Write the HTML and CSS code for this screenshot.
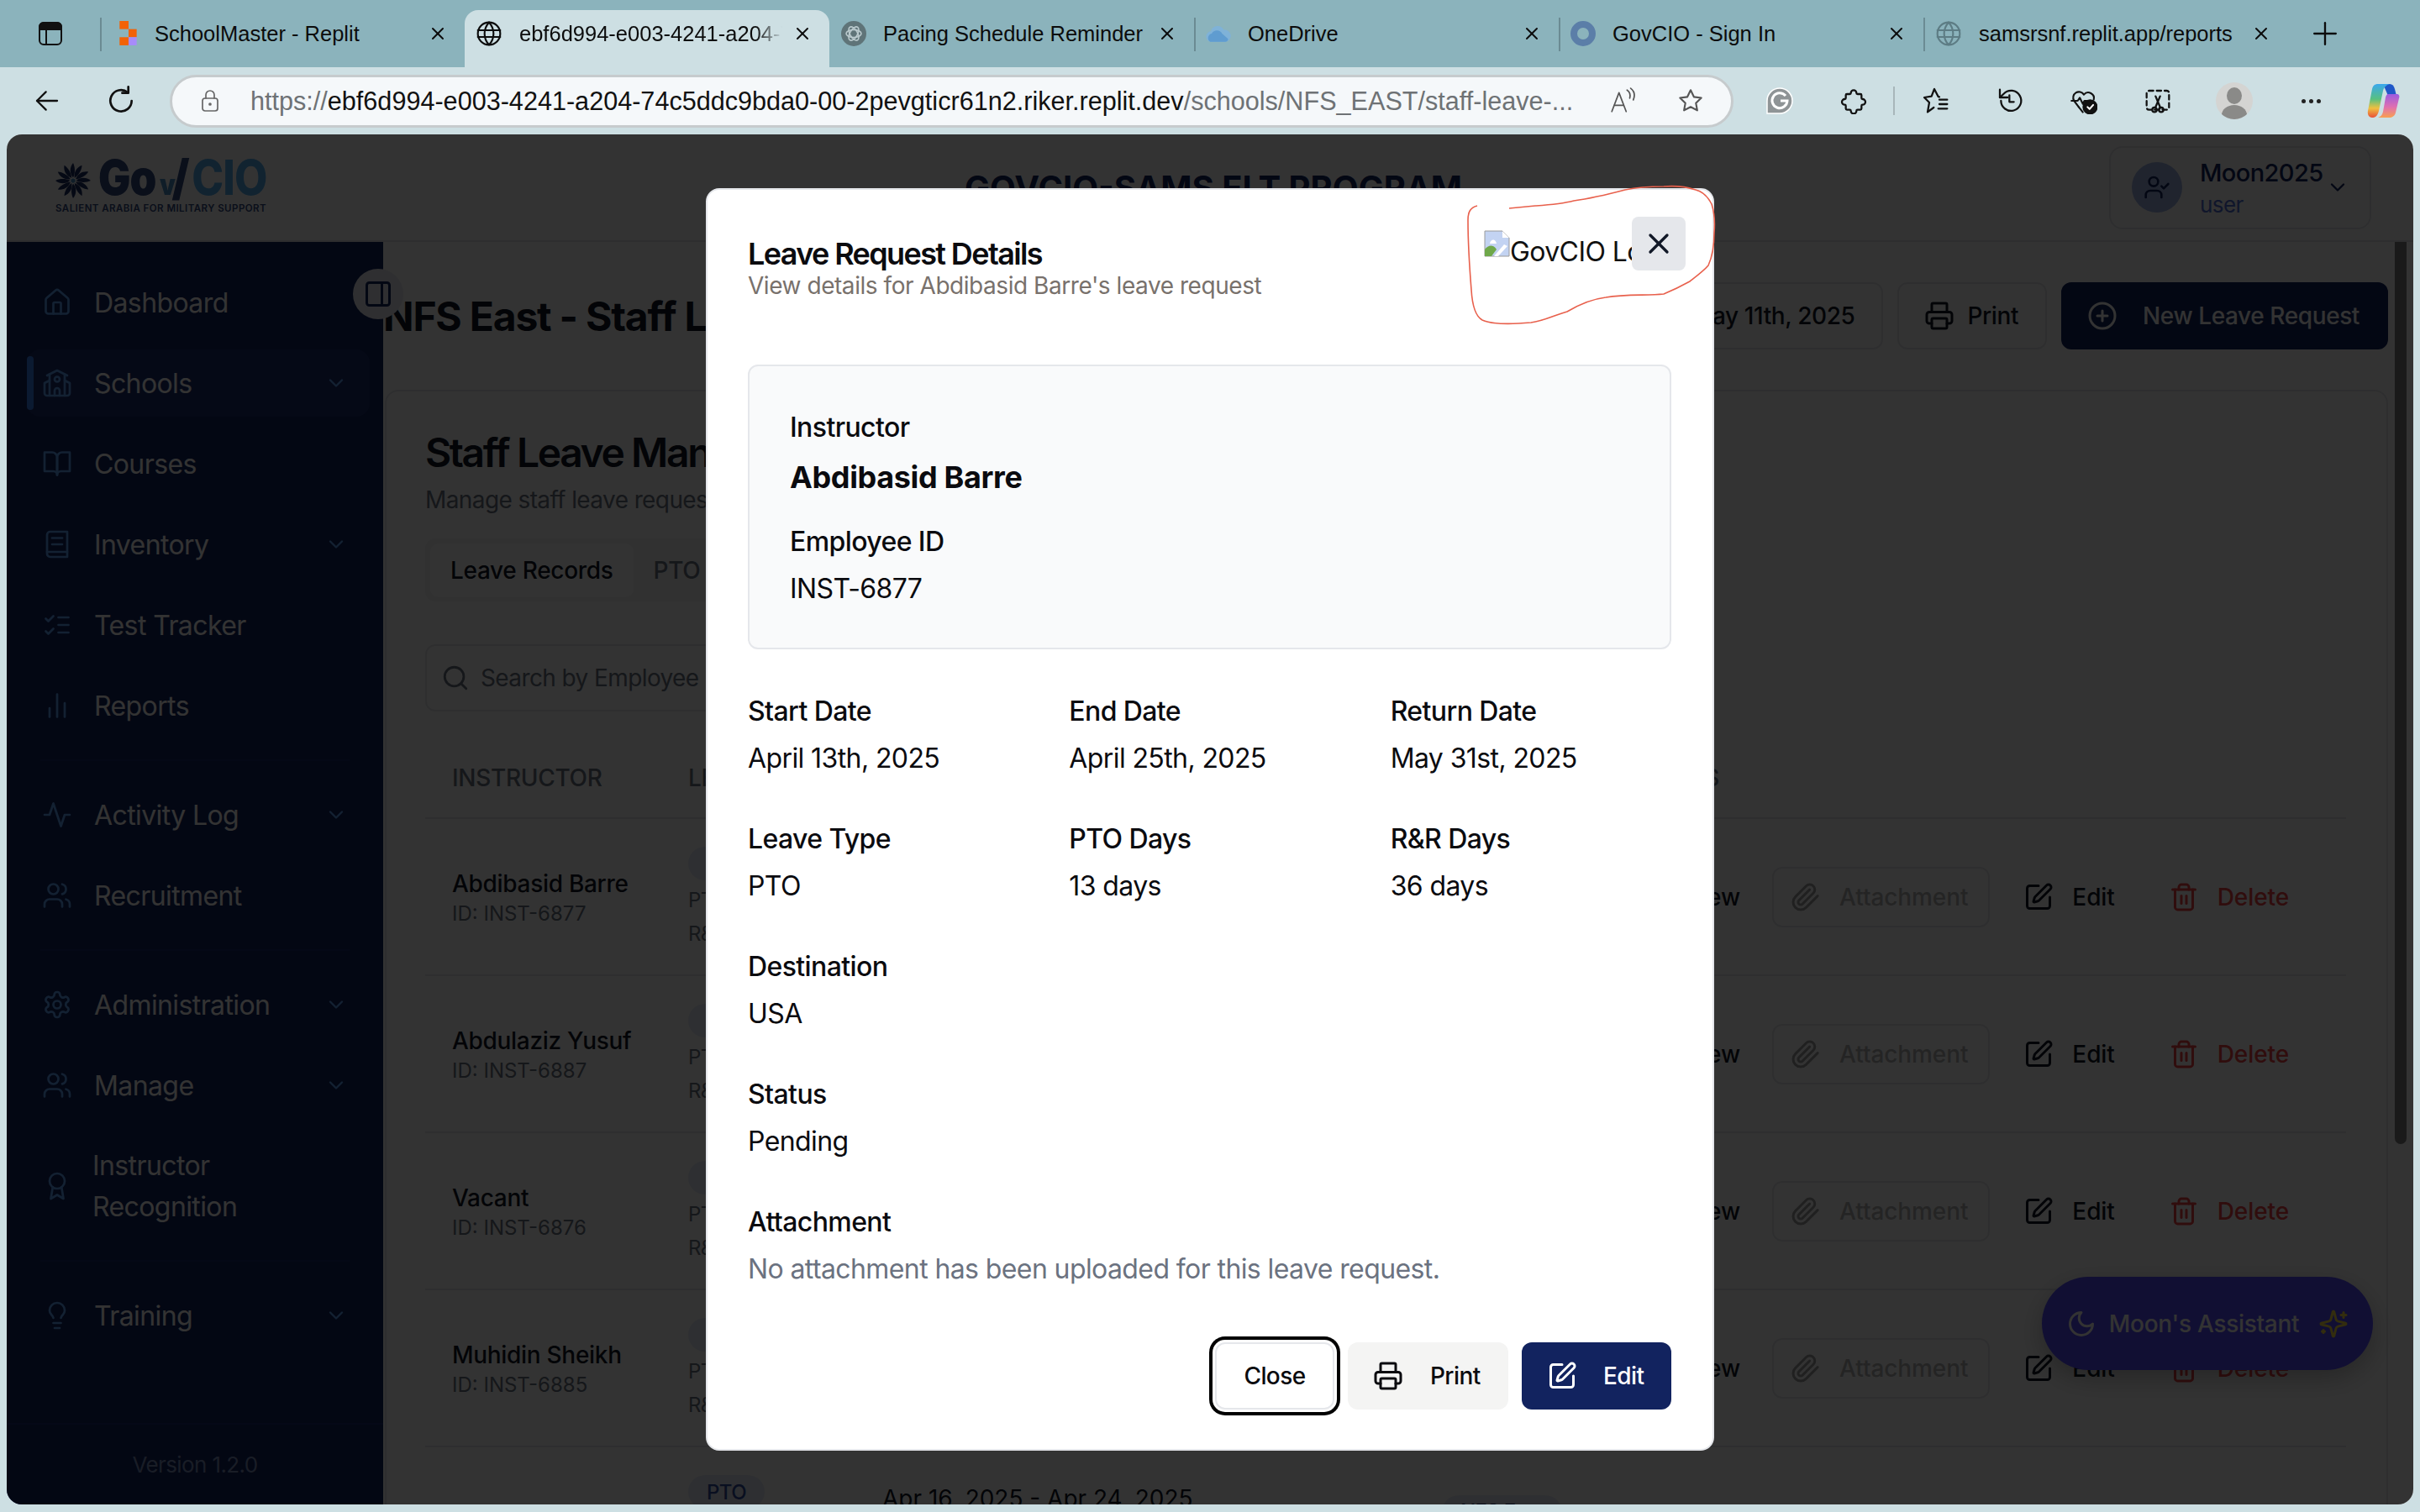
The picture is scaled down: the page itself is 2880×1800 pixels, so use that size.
FILE: index.html
```html
<!DOCTYPE html>
<html lang="en">
<head>
    <meta charset="UTF-8">
    <meta name="viewport" content="width=device-width, initial-scale=1.0">
    <title>Leave Request Details</title>
    <link rel="stylesheet" href="styles.css">
</head>
<body>
    <svg class="sprite" aria-hidden="true">
        <symbol id="i-home" viewBox="0 0 24 24"><path d="M3 10a2 2 0 0 1 .7-1.5l7-6a2 2 0 0 1 2.6 0l7 6a2 2 0 0 1 .7 1.5v9a2 2 0 0 1-2 2H5a2 2 0 0 1-2-2z"/><path d="M15 21v-8a1 1 0 0 0-1-1h-4a1 1 0 0 0-1 1v8"/></symbol>
        <symbol id="i-school" viewBox="0 0 24 24"><path d="M14 22v-4a2 2 0 1 0-4 0v4"/><path d="m18 10 4 2v8a2 2 0 0 1-2 2H4a2 2 0 0 1-2-2v-8l4-2"/><path d="M18 5v17"/><path d="m4 6 8-4 8 4"/><path d="M6 5v17"/><circle cx="12" cy="9" r="2"/></symbol>
        <symbol id="i-book" viewBox="0 0 24 24"><path d="M2 3h6a4 4 0 0 1 4 4v14a3 3 0 0 0-3-3H2z"/><path d="M22 3h-6a4 4 0 0 0-4 4v14a3 3 0 0 1 3-3h7z"/></symbol>
        <symbol id="i-inventory" viewBox="0 0 24 24"><path d="M4 19.5v-15A2.5 2.5 0 0 1 6.5 2H20v20H6.5a2.5 2.5 0 0 1-2.5-2.5z"/><path d="M4 18h16"/><path d="M8 7h8"/><path d="M8 12h8"/></symbol>
        <symbol id="i-checks" viewBox="0 0 24 24"><path d="m3 17 2 2 4-4"/><path d="m3 7 2 2 4-4"/><path d="M13 6h8"/><path d="M13 12h8"/><path d="M13 18h8"/></symbol>
        <symbol id="i-chart" viewBox="0 0 24 24"><path d="M6 21v-7"/><path d="M12 21V3"/><path d="M18 21V10"/></symbol>
        <symbol id="i-activity" viewBox="0 0 24 24"><path d="M22 12h-4l-3 9L9 3l-3 9H2"/></symbol>
        <symbol id="i-users" viewBox="0 0 24 24"><path d="M16 21v-2a4 4 0 0 0-4-4H6a4 4 0 0 0-4 4v2"/><circle cx="9" cy="7" r="4"/><path d="M22 21v-2a4 4 0 0 0-3-3.87"/><path d="M16 3.13a4 4 0 0 1 0 7.75"/></symbol>
        <symbol id="i-settings" viewBox="0 0 24 24"><path d="M12.22 2h-.44a2 2 0 0 0-2 2v.18a2 2 0 0 1-1 1.73l-.43.25a2 2 0 0 1-2 0l-.15-.08a2 2 0 0 0-2.73.73l-.22.38a2 2 0 0 0 .73 2.73l.15.1a2 2 0 0 1 1 1.72v.51a2 2 0 0 1-1 1.74l-.15.09a2 2 0 0 0-.73 2.73l.22.38a2 2 0 0 0 2.73.73l.15-.08a2 2 0 0 1 2 0l.43.25a2 2 0 0 1 1 1.73V20a2 2 0 0 0 2 2h.44a2 2 0 0 0 2-2v-.18a2 2 0 0 1 1-1.73l.43-.25a2 2 0 0 1 2 0l.15.08a2 2 0 0 0 2.73-.73l.22-.39a2 2 0 0 0-.73-2.73l-.15-.08a2 2 0 0 1-1-1.74v-.5a2 2 0 0 1 1-1.74l.15-.09a2 2 0 0 0 .73-2.73l-.22-.38a2 2 0 0 0-2.73-.73l-.15.08a2 2 0 0 1-2 0l-.43-.25a2 2 0 0 1-1-1.73V4a2 2 0 0 0-2-2z"/><circle cx="12" cy="12" r="3"/></symbol>
        <symbol id="i-award" viewBox="0 0 24 24"><circle cx="12" cy="8" r="6"/><path d="M15.477 12.89 17 22l-5-3-5 3 1.523-9.11"/></symbol>
        <symbol id="i-bulb" viewBox="0 0 24 24"><path d="M15 14c.2-1 .7-1.7 1.5-2.5 1-.9 1.5-2.2 1.5-3.5A6 6 0 0 0 6 8c0 1 .2 2.2 1.5 3.5.7.7 1.3 1.5 1.5 2.5"/><path d="M9 18h6"/><path d="M10 22h4"/></symbol>
        <symbol id="i-chevron" viewBox="0 0 24 24"><path d="m6 9 6 6 6-6"/></symbol>
        <symbol id="i-printer" viewBox="0 0 24 24"><path d="M6 18H4a2 2 0 0 1-2-2v-5a2 2 0 0 1 2-2h16a2 2 0 0 1 2 2v5a2 2 0 0 1-2 2h-2"/><path d="M6 9V3a1 1 0 0 1 1-1h10a1 1 0 0 1 1 1v6"/><rect x="6" y="14" width="12" height="8" rx="1"/></symbol>
        <symbol id="i-edit" viewBox="0 0 24 24"><path d="M12 3H5a2 2 0 0 0-2 2v14a2 2 0 0 0 2 2h14a2 2 0 0 0 2-2v-7"/><path d="M18.375 2.625a1 1 0 0 1 3 3l-9.013 9.014a2 2 0 0 1-.853.505l-2.873.84a.5.5 0 0 1-.62-.62l.84-2.873a2 2 0 0 1 .506-.852z"/></symbol>
        <symbol id="i-trash" viewBox="0 0 24 24"><path d="M3 6h18"/><path d="M19 6v14c0 1-1 2-2 2H7c-1 0-2-1-2-2V6"/><path d="M8 6V4c0-1 1-2 2-2h4c1 0 2 1 2 2v2"/><path d="M10 11v6"/><path d="M14 11v6"/></symbol>
        <symbol id="i-clip" viewBox="0 0 24 24"><path d="m21.44 11.05-9.19 9.19a6 6 0 0 1-8.49-8.49l8.57-8.57A4 4 0 1 1 18 8.84l-8.59 8.57a2 2 0 0 1-2.83-2.83l8.49-8.48"/></symbol>
        <symbol id="i-plus-circle" viewBox="0 0 24 24"><circle cx="12" cy="12" r="10"/><path d="M8 12h8"/><path d="M12 8v8"/></symbol>
        <symbol id="i-search" viewBox="0 0 24 24"><circle cx="11" cy="11" r="8"/><path d="m21 21-4.3-4.3"/></symbol>
        <symbol id="i-moon" viewBox="0 0 24 24"><path d="M12 3a6 6 0 0 0 9 9 9 9 0 1 1-9-9Z"/></symbol>
        <symbol id="i-sparkles" viewBox="0 0 24 24"><path d="M9.937 15.5A2 2 0 0 0 8.5 14.063l-6.135-1.582a.5.5 0 0 1 0-.962L8.5 9.936A2 2 0 0 0 9.937 8.5l1.582-6.135a.5.5 0 0 1 .963 0L14.063 8.5A2 2 0 0 0 15.5 9.937l6.135 1.581a.5.5 0 0 1 0 .964L15.5 14.063a2 2 0 0 0-1.437 1.437l-1.582 6.135a.5.5 0 0 1-.963 0z"/><path d="M20 3v4"/><path d="M22 5h-4"/><path d="M4 17v2"/><path d="M5 18H3"/></symbol>
        <symbol id="i-user-check" viewBox="0 0 24 24"><path d="M16 21v-2a4 4 0 0 0-4-4H6a4 4 0 0 0-4 4v2"/><circle cx="9" cy="7" r="4"/><path d="m16 11 2 2 4-4"/></symbol>
        <symbol id="i-panel" viewBox="0 0 24 24"><rect width="18" height="18" x="3" y="3" rx="2"/><path d="M15 3v18"/></symbol>
        <symbol id="i-x" viewBox="0 0 24 24"><path d="M18 6 6 18"/><path d="m6 6 12 12"/></symbol>
        <symbol id="i-globe" viewBox="0 0 24 24"><circle cx="12" cy="12" r="10"/><path d="M12 2a14.5 14.5 0 0 0 0 20 14.5 14.5 0 0 0 0-20"/><path d="M2 9h20"/><path d="M2 15h20"/></symbol>
    </svg>

    <div class="browser">
        <div class="tabbar">
            <div class="window-btn">
                <svg class="icon" viewBox="0 0 28 28"><rect x="1" y="1" width="26" height="26" rx="5"/><path class="solid" d="M1 6a5 5 0 0 1 5-5h16a5 5 0 0 1 5 5v3H1z"/><path d="M9 9v18"/></svg>
            </div>
            <div class="tab tab-first">
                <svg class="favicon" viewBox="0 0 20 28"><rect x="0" y="0" width="10" height="9" fill="#f26207"/><rect x="10" y="9" width="9" height="9" fill="#f26207"/><rect x="0" y="18" width="10" height="9" fill="#f26207"/><rect x="10" y="18" width="9" height="9" fill="#a78bfa"/></svg>
                <span class="tab-title">SchoolMaster - Replit</span>
                <svg class="icon tab-close"><use href="#i-x"/></svg>
            </div>
            <div class="tab tab-active">
                <svg class="icon favicon-globe"><use href="#i-globe"/></svg>
                <span class="tab-title tab-fade">ebf6d994-e003-4241-a204-74c5ddc9bda0</span>
                <svg class="icon tab-close"><use href="#i-x"/></svg>
            </div>
            <div class="tab tab-after-active">
                <svg class="favicon" viewBox="0 0 30 30"><circle cx="15" cy="15" r="15" fill="#5f7478"/><g fill="none" stroke="#b9c9cc" stroke-width="1.6"><ellipse cx="15" cy="15" rx="9" ry="4.5"/><ellipse cx="15" cy="15" rx="9" ry="4.5" transform="rotate(60 15 15)"/><ellipse cx="15" cy="15" rx="9" ry="4.5" transform="rotate(120 15 15)"/></g></svg>
                <span class="tab-title">Pacing Schedule Reminder</span>
                <svg class="icon tab-close"><use href="#i-x"/></svg>
            </div>
            <div class="tab">
                <svg class="favicon" viewBox="0 0 34 24"><path fill="#7fb2d8" d="M8 23a7 7 0 0 1-1-14 9 9 0 0 1 17-2 7 7 0 0 1 3 16z"/><path fill="#5f9cd0" d="M6 23a6 6 0 0 1 2-11 8 8 0 0 1 14 0l8 7a4 4 0 0 1-3 4z"/></svg>
                <span class="tab-title">OneDrive</span>
                <svg class="icon tab-close"><use href="#i-x"/></svg>
            </div>
            <div class="tab">
                <svg class="favicon" viewBox="0 0 30 30"><circle cx="15" cy="15" r="11" fill="none" stroke="#5b7ea8" stroke-width="8"/></svg>
                <span class="tab-title">GovCIO - Sign In</span>
                <svg class="icon tab-close"><use href="#i-x"/></svg>
            </div>
            <div class="tab tab-last">
                <svg class="icon favicon-globe favicon-muted"><use href="#i-globe"/></svg>
                <span class="tab-title">samsrsnf.replit.app/reports</span>
                <svg class="icon tab-close"><use href="#i-x"/></svg>
            </div>
            <div class="new-tab">
                <svg class="icon" viewBox="0 0 24 24"><path d="M12 1v22"/><path d="M1 12h22"/></svg>
            </div>
        </div>

        <div class="toolbar">
            <svg class="icon tool tool-back" viewBox="0 0 24 24"><path d="M21 12H3"/><path d="m11 4-8 8 8 8"/></svg>
            <svg class="icon tool tool-reload" viewBox="0 0 24 24"><path d="M20 12a8 8 0 1 1-3-6.3"/><path d="M17.5 1.5v4.6h-4.6"/></svg>
            <div class="urlbar">
                <svg class="icon url-lock" viewBox="0 0 24 28"><rect x="3" y="11" width="18" height="15" rx="3"/><path d="M7 11V7a5 5 0 0 1 10 0v4"/><circle cx="12" cy="18" r="1"/></svg>
                <span class="url-text"><span class="url-dim">https://</span>ebf6d994-e003-4241-a204-74c5ddc9bda0-00-2pevgticr61n2.riker.replit.dev<span class="url-dim">/schools/NFS_EAST/staff-leave-...</span></span>
                <svg class="icon url-icon url-read" viewBox="0 0 30 30"><path d="M3 27 11 6l8 21"/><path d="M6 20h10"/><path d="M20 3c3 2 4 5 3 9"/><path d="M24 1c4 3 5 8 3 13"/></svg>
                <svg class="icon url-icon" viewBox="0 0 24 24"><path d="m12 2.5 2.9 6 6.6.9-4.8 4.6 1.2 6.5L12 17.4l-5.9 3.1 1.2-6.5-4.8-4.6 6.6-.9z"/></svg>
            </div>
            <div class="tool-group">
                <svg class="ext-g" viewBox="0 0 32 32"><path fill="#8f9496" stroke="#fff" stroke-width="1.5" d="M16 1a15 15 0 0 1 0 30H1V16A15 15 0 0 1 16 1z"/><path fill="none" stroke="#fff" stroke-width="3" d="M23 10a9 9 0 1 0 2 6h-8"/></svg>
                <svg class="icon tool" viewBox="0 0 24 24"><path d="M9.5 5a2.5 2.5 0 1 1 5 0c0 .6.4 1 1 1H18a1 1 0 0 1 1 1v2.5c0 .6.4 1 1 1a2.5 2.5 0 0 1 0 5 1 1 0 0 0-1 1V19a1 1 0 0 1-1 1h-2.5a1 1 0 0 0-1 1 2.5 2.5 0 0 1-5 0 1 1 0 0 0-1-1H6a1 1 0 0 1-1-1v-2.5a1 1 0 0 0-1-1 2.5 2.5 0 0 1 0-5 1 1 0 0 0 1-1V7a1 1 0 0 1 1-1h2.5c.6 0 1-.4 1-1z"/></svg>
                <span class="tool-sep"></span>
                <svg class="icon tool" viewBox="0 0 24 24"><path d="M15 8.5 14 8.300 10.500 1.500 8 8 1.500 9l4.500 4.500L4.500 22l5.500-4"/><path d="M15 11h7"/><path d="M15 15h7"/><path d="M14 19h8"/></svg>
                <svg class="icon tool" viewBox="0 0 24 24"><path d="M4 12a9 9 0 1 0 2.600-6.400L3 9"/><path d="M3 2v7h7"/><path d="M11.500 7v6h4"/></svg>
                <svg class="icon tool" viewBox="0 0 26 26"><path d="M8 19 3.500 13a5.500 5.500 0 0 1 9.500-6 5.500 5.500 0 0 1 9.500 5"/><path d="M1 13h6l2-3 3 6 1.500-3h2"/><path d="m8 19 4 5"/><circle class="solid" cx="19" cy="19" r="6.500"/><path class="tick" d="m16.500 19 2 2 3.500-4"/></svg>
                <svg class="icon tool tool-shot" viewBox="0 0 24 24"><rect x="2" y="3" width="20" height="17" rx="2" stroke-dasharray="4 3"/><circle cx="9" cy="20" r="2"/><circle cx="15" cy="20" r="2"/><path d="m9.800 18 4.200-10"/><path d="m14.200 18-4.200-10"/></svg>
                <span class="profile"><span class="profile-head"></span><span class="profile-body"></span></span>
                <span class="more-dots"><i></i><i></i><i></i></span>
                <svg class="copilot" viewBox="0 0 40 44"><defs><linearGradient id="cop-a" x1="0" y1="0" x2="0" y2="1"><stop offset="0" stop-color="#3aa8ee"/><stop offset=".45" stop-color="#58c080"/><stop offset=".72" stop-color="#f0c040"/><stop offset="1" stop-color="#e8503a"/></linearGradient><linearGradient id="cop-b" x1="0" y1="0" x2="0" y2="1"><stop offset="0" stop-color="#9a5ce0"/><stop offset=".55" stop-color="#e070b0"/><stop offset="1" stop-color="#f8a050"/></linearGradient></defs><path fill="#2058c8" d="M20 2h8c3 0 5 2 6 6l2 8H26z"/><path fill="url(#cop-a)" d="M14 2h14c-4 1-7 4-8 8l-5 24c-1 4-3 8-7 8H7c-3 0-6-3-5-8l5-26c1-4 3-6 7-6z"/><path fill="url(#cop-b)" d="M26 14h10c3 0 4 2 3 5l-4 17c-1 4-4 6-8 6H14c3-1 5-3 6-7l3-17c.500-2 1.500-4 3-4z"/></svg>
            </div>
        </div>

        <div class="app">
            <header class="app-header">
                <div class="logo">
                    <div class="logo-mark">
                        <svg class="logo-swirl" viewBox="0 0 48 48">
                            <path id="blade" fill="#1d2f66" d="M24 20C19 14 19 6 24 0c3 6 3 14 0 20z"/>
                            <use href="#blade" class="blade-teal" transform="rotate(30 24 24)"/>
                            <use href="#blade" transform="rotate(60 24 24)"/>
                            <use href="#blade" class="blade-teal" transform="rotate(90 24 24)"/>
                            <use href="#blade" transform="rotate(120 24 24)"/>
                            <use href="#blade" class="blade-teal" transform="rotate(150 24 24)"/>
                            <use href="#blade" transform="rotate(180 24 24)"/>
                            <use href="#blade" class="blade-teal" transform="rotate(210 24 24)"/>
                            <use href="#blade" transform="rotate(240 24 24)"/>
                            <use href="#blade" class="blade-teal" transform="rotate(270 24 24)"/>
                            <use href="#blade" transform="rotate(300 24 24)"/>
                            <use href="#blade" class="blade-teal" transform="rotate(330 24 24)"/>
                            <circle cx="24" cy="24" r="3" fill="#4a90c8"/>
                        </svg>
                        <span class="logo-word">Go<span class="logo-v">v</span><span class="logo-slash">/</span><span class="logo-cio">CIO</span></span>
                    </div>
                    <div class="logo-tag">SALIENT ARABIA FOR MILITARY SUPPORT</div>
                </div>
                <h1 class="app-title">GOVCIO-SAMS ELT PROGRAM</h1>
                <div class="user-wrap">
                    <div class="user-box">
                        <span class="user-avatar"><svg class="icon"><use href="#i-user-check"/></svg></span>
                        <span class="user-text">
                            <span class="user-name">Moon2025</span>
                            <span class="user-role">user</span>
                        </span>
                        <svg class="icon user-chevron"><use href="#i-chevron"/></svg>
                    </div>
                </div>
            </header>

            <div class="app-body">
                <aside class="sidebar">
                    <nav class="nav">
                        <a class="nav-item"><svg class="icon nav-icon"><use href="#i-home"/></svg><span class="nav-label">Dashboard</span></a>
                        <a class="nav-item nav-active"><svg class="icon nav-icon"><use href="#i-school"/></svg><span class="nav-label">Schools</span><svg class="icon nav-chevron"><use href="#i-chevron"/></svg></a>
                        <a class="nav-item"><svg class="icon nav-icon"><use href="#i-book"/></svg><span class="nav-label">Courses</span></a>
                        <a class="nav-item"><svg class="icon nav-icon"><use href="#i-inventory"/></svg><span class="nav-label">Inventory</span><svg class="icon nav-chevron"><use href="#i-chevron"/></svg></a>
                        <a class="nav-item"><svg class="icon nav-icon"><use href="#i-checks"/></svg><span class="nav-label">Test Tracker</span></a>
                        <a class="nav-item"><svg class="icon nav-icon"><use href="#i-chart"/></svg><span class="nav-label">Reports</span></a>
                        <hr class="nav-divider">
                        <a class="nav-item"><svg class="icon nav-icon"><use href="#i-activity"/></svg><span class="nav-label">Activity Log</span><svg class="icon nav-chevron"><use href="#i-chevron"/></svg></a>
                        <a class="nav-item"><svg class="icon nav-icon"><use href="#i-users"/></svg><span class="nav-label">Recruitment</span></a>
                        <hr class="nav-divider">
                        <a class="nav-item"><svg class="icon nav-icon"><use href="#i-settings"/></svg><span class="nav-label">Administration</span><svg class="icon nav-chevron"><use href="#i-chevron"/></svg></a>
                        <a class="nav-item"><svg class="icon nav-icon"><use href="#i-users"/></svg><span class="nav-label">Manage</span><svg class="icon nav-chevron"><use href="#i-chevron"/></svg></a>
                        <a class="nav-item nav-tall"><svg class="icon nav-icon"><use href="#i-award"/></svg><span class="nav-label">Instructor Recognition</span></a>
                        <hr class="nav-divider">
                        <a class="nav-item"><svg class="icon nav-icon"><use href="#i-bulb"/></svg><span class="nav-label">Training</span><svg class="icon nav-chevron"><use href="#i-chevron"/></svg></a>
                    </nav>
                    <div class="sidebar-foot">Version 1.2.0</div>
                </aside>

                <main class="main">
                    <div class="page-head">
                        <h2 class="page-title">NFS East - Staff Leave Management</h2>
                        <div class="page-actions">
                            <button class="btn btn-outline">Apr 11th, 2025 - May 11th, 2025</button>
                            <button class="btn btn-print"><svg class="icon"><use href="#i-printer"/></svg>Print</button>
                            <button class="btn btn-navy"><svg class="icon"><use href="#i-plus-circle"/></svg>New Leave Request</button>
                        </div>
                    </div>

                    <section class="card">
                        <h3 class="card-title">Staff Leave Management</h3>
                        <p class="card-sub">Manage staff leave requests and balances</p>
                        <div class="tabs">
                            <span class="tab-pill tab-pill-on">Leave Records</span>
                            <span class="tab-pill">PTO Balance</span>
                        </div>
                        <div class="search">
                            <svg class="icon"><use href="#i-search"/></svg>
                            <input type="text" class="search-input" placeholder="Search by Employee ID or name">
                        </div>

                        <div class="table">
                            <div class="t-head">
                                <span class="c-name">INSTRUCTOR</span>
                                <span class="c-leave">LEAVE TYPE</span>
                                <span class="c-actions">ACTIONS</span>
                            </div>
                            <div class="t-row">
                                <div class="c-name"><div class="person">Abdibasid Barre</div><div class="person-id">ID: INST-6877</div></div>
                                <div class="c-leave"><span class="pill">PTO</span><span class="leave-line">PTO: 13</span><span class="leave-line">R&amp;R: 36</span></div>
                                <div class="c-actions"><span class="act act-view">View</span><span class="act act-attach"><svg class="icon"><use href="#i-clip"/></svg>Attachment</span><span class="act"><svg class="icon"><use href="#i-edit"/></svg>Edit</span><span class="act act-del"><svg class="icon"><use href="#i-trash"/></svg>Delete</span></div>
                            </div>
                            <div class="t-row">
                                <div class="c-name"><div class="person">Abdulaziz Yusuf</div><div class="person-id">ID: INST-6887</div></div>
                                <div class="c-leave"><span class="pill">PTO</span><span class="leave-line">PTO</span><span class="leave-line">R&amp;R</span></div>
                                <div class="c-actions"><span class="act act-view">View</span><span class="act act-attach"><svg class="icon"><use href="#i-clip"/></svg>Attachment</span><span class="act"><svg class="icon"><use href="#i-edit"/></svg>Edit</span><span class="act act-del"><svg class="icon"><use href="#i-trash"/></svg>Delete</span></div>
                            </div>
                            <div class="t-row">
                                <div class="c-name"><div class="person">Vacant</div><div class="person-id">ID: INST-6876</div></div>
                                <div class="c-leave"><span class="pill">PTO</span><span class="leave-line">PTO</span><span class="leave-line">R&amp;R</span></div>
                                <div class="c-actions"><span class="act act-view">View</span><span class="act act-attach"><svg class="icon"><use href="#i-clip"/></svg>Attachment</span><span class="act"><svg class="icon"><use href="#i-edit"/></svg>Edit</span><span class="act act-del"><svg class="icon"><use href="#i-trash"/></svg>Delete</span></div>
                            </div>
                            <div class="t-row">
                                <div class="c-name"><div class="person">Muhidin Sheikh</div><div class="person-id">ID: INST-6885</div></div>
                                <div class="c-leave"><span class="pill">PTO</span><span class="leave-line">PTO</span><span class="leave-line">R&amp;R</span></div>
                                <div class="c-actions"><span class="act act-view">View</span><span class="act act-attach"><svg class="icon"><use href="#i-clip"/></svg>Attachment</span><span class="act"><svg class="icon"><use href="#i-edit"/></svg>Edit</span><span class="act act-del"><svg class="icon"><use href="#i-trash"/></svg>Delete</span></div>
                            </div>
                            <div class="t-row">
                                <div class="c-name"><div class="person">Paul M</div></div>
                                <div class="c-leave c-leave-top"><span class="pill pill-text">PTO</span></div>
                                <div class="c-dates">Apr 16, 2025 - Apr 24, 2025</div>
                                <div class="c-loc"><span class="pill">NFS East</span></div>
                            </div>
                        </div>
                    </section>

                    <div class="scroll-thumb"></div>
                </main>
            </div>

            <button class="assistant">
                <svg class="icon"><use href="#i-moon"/></svg>
                <span>Moon's Assistant</span>
                <svg class="icon assistant-star"><use href="#i-sparkles"/></svg>
            </button>

            <button class="sidebar-toggle"><svg class="icon"><use href="#i-panel"/></svg></button>

            <div class="overlay">
                <div class="modal">
                    <div class="modal-head">
                        <div>
                            <h2 class="modal-title">Leave Request Details</h2>
                            <p class="modal-desc">View details for Abdibasid Barre's leave request</p>
                        </div>
                        <div class="broken-img">
                            <svg class="broken-icon" viewBox="0 0 31 32"><path fill="#c3d3f2" stroke="#9a9a9a" d="M1 1h21l8 8v22H1z"/><path fill="#fff" d="M22 1v8h8z"/><path fill="#fff" d="M7 16c1-6 7-6 8 0z"/><path fill="#6fa84a" d="M1 31v-8c4-6 11-6 14 0l-6 8z"/><path fill="#fff" d="m12 31 12-14 4 2-11 12z"/></svg>
                            <span>GovCIO Logo</span>
                        </div>
                    </div>

                    <div class="person-box">
                        <div class="field-label">Instructor</div>
                        <div class="person-name">Abdibasid Barre</div>
                        <div class="field-label person-gap">Employee ID</div>
                        <div class="field-value">INST-6877</div>
                    </div>

                    <div class="fields">
                        <div class="field"><div class="field-label">Start Date</div><div class="field-value">April 13th, 2025</div></div>
                        <div class="field"><div class="field-label">End Date</div><div class="field-value">April 25th, 2025</div></div>
                        <div class="field"><div class="field-label">Return Date</div><div class="field-value">May 31st, 2025</div></div>
                        <div class="field"><div class="field-label">Leave Type</div><div class="field-value">PTO</div></div>
                        <div class="field"><div class="field-label">PTO Days</div><div class="field-value">13 days</div></div>
                        <div class="field"><div class="field-label">R&amp;R Days</div><div class="field-value">36 days</div></div>
                        <div class="field field-wide"><div class="field-label">Destination</div><div class="field-value">USA</div></div>
                        <div class="field field-wide"><div class="field-label">Status</div><div class="field-value">Pending</div></div>
                        <div class="field field-wide"><div class="field-label">Attachment</div><div class="field-value field-muted">No attachment has been uploaded for this leave request.</div></div>
                    </div>

                    <div class="modal-foot">
                        <button class="mbtn mbtn-close">Close</button>
                        <button class="mbtn mbtn-print"><svg class="icon"><use href="#i-printer"/></svg>Print</button>
                        <button class="mbtn mbtn-edit"><svg class="icon"><use href="#i-edit"/></svg>Edit</button>
                    </div>

                    <button class="modal-x"><svg class="icon"><use href="#i-x"/></svg></button>
                </div>
            </div>
        </div>

        <svg class="scribble" viewBox="0 0 2880 1800"><path d="M1758 245C1750 247 1747 252 1747 262C1747 290 1749 320 1751 345C1752 362 1755 376 1764 381C1775 386 1800 386 1822 384C1838 382 1850 375 1865 371C1880 362 1895 356 1911 354C1935 350 1960 352 1980 350C1992 345 2002 340 2011 335C2020 328 2028 322 2033 316C2038 305 2040 290 2040 277C2041 265 2040 252 2037 243C2033 235 2026 228 2018 226C2006 222 1992 221 1980 222C1965 222 1948 223 1934 226C1915 231 1895 236 1873 239C1858 243 1842 244 1827 245C1816 246 1806 247 1796 248"/></svg>
    </div>
</body>
</html>
```

FILE: styles.css
```css
* {
    box-sizing: border-box;
}

html,
body {
    margin: 0;
    padding: 0;
    width: 2880px;
    height: 1800px;
    overflow: hidden;
}

body {
    font-family: Inter, "Liberation Sans", sans-serif;
    font-size: 32px;
    color: #111827;
    background-color: #cddfe3;
}

h1, h2, h3, p {
    margin: 0;
}

button,
input {
    font-family: inherit;
    letter-spacing: inherit;
}

button {
    cursor: pointer;
}

.sprite {
    display: none;
}

.icon {
    width: 28px;
    height: 28px;
    flex-shrink: 0;
    fill: none;
    stroke: currentColor;
    stroke-width: 2;
    stroke-linecap: round;
    stroke-linejoin: round;
}

.browser {
    position: relative;
    display: flex;
    flex-direction: column;
    width: 2880px;
    height: 1800px;
}

/* browser tabs */
.tabbar {
    display: flex;
    align-items: flex-end;
    height: 80px;
    flex-shrink: 0;
    background-color: #8bb3bc;
    font-family: "Liberation Sans", Arial, sans-serif;
    font-size: 25.5px;
    color: #0c0c0c;
}

.window-btn {
    display: flex;
    justify-content: center;
    align-items: center;
    width: 119px;
    height: 80px;
    color: #111;
}

.window-btn .solid {
    fill: currentColor;
}

.tab {
    position: relative;
    display: flex;
    align-items: center;
    gap: 20px;
    width: 434px;
    height: 80px;
    padding: 0 20px 0 14px;
}

.tab::before {
    content: "";
    position: absolute;
    left: 0;
    top: 21px;
    width: 2px;
    height: 40px;
    background-color: #6b8b93;
}

.tab-first {
    padding-left: 19px;
    gap: 16px;
}

.tab-active {
    height: 68px;
    padding: 0 20px 12px 13px;
    gap: 20px;
    background-color: #cddfe3;
    border-radius: 16px 16px 0 0;
}

.tab-active .tab-close {
    margin-left: -8px;
}

.tab-after-active .tab-close {
    margin-left: -12px;
}

.tab-active::before,
.tab-after-active::before {
    display: none;
}

.tab-title {
    flex: 1;
    min-width: 0;
    white-space: nowrap;
    overflow: hidden;
}

.tab-fade {
    -webkit-mask-image: linear-gradient(to right, #000 90%, transparent 100%);
    mask-image: linear-gradient(to right, #000 90%, transparent 100%);
}

.tab-close {
    width: 24px;
    height: 24px;
}

.favicon {
    width: 30px;
    height: 30px;
    flex-shrink: 0;
}

.favicon-globe {
    width: 32px;
    height: 32px;
    stroke-width: 1.6;
}

.favicon-muted {
    color: #5d7c84;
}

.new-tab {
    display: flex;
    justify-content: center;
    align-items: center;
    width: 88px;
    height: 80px;
}

/* address bar */
.toolbar {
    display: flex;
    align-items: center;
    height: 80px;
    flex-shrink: 0;
    padding-left: 40px;
    background-color: #cddfe3;
    color: #111;
}

.tool {
    width: 32px;
    height: 32px;
    stroke-width: 1.7;
}

.tool-reload {
    width: 38px;
    height: 38px;
    margin-left: 53px;
}

.urlbar {
    display: flex;
    align-items: center;
    width: 1861px;
    height: 63px;
    margin-left: 39px;
    padding: 0 32px 0 33px;
    background-color: #f5f8fa;
    border: 3px solid #c6cbcd;
    border-radius: 32px;
    font-family: "Liberation Sans", Arial, sans-serif;
    font-size: 30.6px;
    color: #111;
}

.url-lock {
    width: 24px;
    height: 30px;
    color: #666;
    stroke-width: 1.7;
}

.url-text {
    flex: 1;
    margin-left: 36px;
    white-space: nowrap;
}

.url-dim {
    color: #6e7275;
}

.url-icon {
    width: 32px;
    height: 32px;
    margin-left: 49px;
    color: #555;
    stroke-width: 1.6;
}

.url-read {
    margin-left: 0;
}

.tool-group {
    display: flex;
    align-items: center;
    margin-left: 39px;
    gap: 56px;
}

.tool-group .solid {
    fill: #111;
}

.tool-group .tick {
    stroke: #fff;
}

.ext-g {
    width: 32px;
    height: 32px;
}

.tool-sep {
    width: 2px;
    height: 34px;
    margin: 0 -23px 0 -25px;
    background-color: #a8b6ba;
}

.profile {
    position: relative;
    display: block;
    width: 44px;
    height: 44px;
    margin-left: -3px;
    overflow: hidden;
    background-color: #d4d4d2;
    border-radius: 50%;
}

.profile-head {
    position: absolute;
    left: 13px;
    top: 6px;
    width: 18px;
    height: 20px;
    background-color: #8a8a88;
    border-radius: 50%;
}

.profile-body {
    position: absolute;
    left: 7px;
    top: 27px;
    width: 30px;
    height: 24px;
    background-color: #8a8a88;
    border-radius: 50%;
}

.more-dots {
    display: flex;
    gap: 4px;
    margin-left: 2px;
}

.more-dots i {
    width: 5px;
    height: 5px;
    background-color: #222;
    border-radius: 50%;
}

.copilot {
    width: 44px;
    height: 44px;
    margin-left: -4px;
}

/* app */
.app {
    position: relative;
    display: flex;
    flex-direction: column;
    flex: 1;
    min-height: 0;
    margin: 0 8px 9px;
    overflow: hidden;
    background-color: #fff;
    border-radius: 18px;
    letter-spacing: -.6px;
}

.app-header {
    display: grid;
    grid-template-columns: 1fr auto 1fr;
    align-items: center;
    height: 128px;
    flex-shrink: 0;
    padding: 0 50px 0 58px;
    border-bottom: 2px solid #e5e7eb;
}

.logo-mark {
    display: flex;
    align-items: center;
    gap: 9px;
    height: 44px;
    margin-top: 2px;
}

.logo-swirl {
    width: 42px;
    height: 42px;
}

.blade-teal {
    fill: #4a90c8;
}

.logo-word {
    display: inline-block;
    transform: scaleX(.88);
    transform-origin: left center;
    font-size: 58px;
    line-height: 58px;
    font-weight: 900;
    letter-spacing: -1px;
    color: #324a82;
    white-space: nowrap;
}

.logo-v {
    margin-left: 5px;
    font-size: 34px;
    color: #4a90c8;
}

.logo-slash {
    margin-left: -4px;
}

.logo-cio {
    margin-left: 4px;
    color: #58b0f0;
    font-weight: 800;
}

.logo-tag {
    margin-top: 4px;
    font-size: 11.5px;
    font-weight: 600;
    letter-spacing: .45px;
    color: #324a82;
    white-space: nowrap;
}

.app-title {
    font-size: 40px;
    font-weight: 700;
    letter-spacing: 0;
    color: #12235f;
    white-space: nowrap;
}

.user-wrap {
    display: flex;
    justify-content: flex-end;
}

.user-box {
    display: flex;
    align-items: center;
    width: 312px;
    height: 99px;
    padding: 0 24px 0 25px;
    border: 2px solid #e5e7eb;
    border-radius: 16px;
}

.user-avatar {
    display: flex;
    justify-content: center;
    align-items: center;
    width: 60px;
    height: 60px;
    background-color: #a0b4e6;
    border-radius: 50%;
    color: #12235f;
}

.user-avatar .icon {
    width: 32px;
    height: 32px;
}

.user-text {
    display: flex;
    flex-direction: column;
    flex: 1;
    margin-top: 3px;
    margin-left: 21px;
}

.user-name {
    font-size: 29px;
    line-height: 38px;
    font-weight: 500;
    color: #12235f;
}

.user-role {
    font-size: 26px;
    line-height: 38px;
    color: #4f6fd8;
}

.user-chevron {
    color: #12235f;
}

.app-body {
    display: flex;
    flex: 1;
    min-height: 0;
}

/* sidebar */
.sidebar {
    display: flex;
    flex-direction: column;
    width: 448px;
    flex-shrink: 0;
    background-color: #12235f;
    color: #fff;
}

.nav {
    display: flex;
    flex-direction: column;
    flex: 1;
    gap: 16px;
    padding: 32px 16px 0 24px;
}

.nav-item {
    position: relative;
    display: flex;
    align-items: center;
    height: 80px;
    padding: 0 26px 0 18px;
    border-radius: 16px;
    font-size: 32px;
}

.nav-active {
    background-color: #1c2e70;
}

.nav-active::before {
    content: "";
    position: absolute;
    left: 0;
    top: 8px;
    width: 8px;
    height: 64px;
    background-color: #3b82f6;
    border-radius: 4px;
}

.nav-tall {
    height: 128px;
    line-height: 49px;
}

.nav-icon {
    width: 36px;
    height: 36px;
    color: #60a5fa;
    stroke-width: 1.8;
}

.nav-label {
    flex: 1;
    margin-left: 26px;
}

.nav-tall .nav-label {
    margin-left: 24px;
}

.nav-chevron {
    width: 28px;
    height: 28px;
    color: #60a5fa;
}

.nav-divider {
    width: 368px;
    height: 2px;
    margin: 8px 0 8px 16px;
    border: 0;
    background-color: #172a6e;
}

.sidebar-foot {
    display: flex;
    justify-content: center;
    align-items: center;
    height: 97px;
    border-top: 2px solid #1a2c72;
    font-size: 26px;
    color: #7c8fbf;
}

.sidebar-toggle {
    position: absolute;
    left: 412px;
    top: 160px;
    z-index: 1;
    display: flex;
    justify-content: center;
    align-items: center;
    width: 60px;
    height: 60px;
    padding: 0;
    border: 0;
    border-radius: 50%;
    color: #12235f;
    background-color: #e8ebf2;
}

.sidebar-toggle .icon {
    width: 36px;
    height: 36px;
}

/* page */
.main {
    position: relative;
    flex: 1;
    min-width: 0;
    padding: 48px 30px 0 0;
    overflow: hidden;
}

.page-head {
    display: flex;
    justify-content: space-between;
    align-items: center;
    height: 80px;
}

.page-title {
    font-size: 48px;
    font-weight: 700;
    letter-spacing: -.025em;
    white-space: nowrap;
}

.page-actions {
    display: flex;
    gap: 17px;
}

.btn {
    display: flex;
    align-items: center;
    height: 80px;
    padding: 0 32px;
    border: 2px solid #e5e7eb;
    border-radius: 12px;
    background-color: #fff;
    font-size: 28px;
    font-weight: 500;
    letter-spacing: -.4px;
    color: #111827;
    white-space: nowrap;
}

.btn .icon {
    width: 36px;
    height: 36px;
}

.btn-print {
    gap: 15px;
    padding-left: 30px;
}

.btn-navy {
    gap: 30px;
    padding-left: 29px;
    background-color: #12235f;
    border-color: #12235f;
    color: #fff;
}

.card {
    margin: 48px 0 0 2px;
    padding: 49px 46px 0;
    height: 1400px;
    border: 2px solid #e5e7eb;
    border-radius: 16px;
}

.card-title {
    font-size: 48px;
    line-height: 48px;
    font-weight: 600;
    letter-spacing: -.05em;
}

.card-sub {
    margin-top: 12px;
    font-size: 28px;
    line-height: 40px;
    color: #6b7280;
}

.tabs {
    display: inline-flex;
    align-items: center;
    height: 75px;
    margin-top: 26px;
    padding: 0 6px;
    background-color: #f3f4f6;
    border-radius: 12px;
    font-size: 28px;
    font-weight: 500;
    letter-spacing: -.3px;
    color: #6b7280;
}

.tab-pill {
    display: flex;
    align-items: center;
    height: 64px;
    padding: 0 24px;
    border-radius: 10px;
}

.tab-pill-on {
    background-color: #fff;
    color: #111827;
}

.search {
    display: flex;
    align-items: center;
    gap: 13px;
    width: 1000px;
    height: 80px;
    margin-top: 51px;
    padding: 0 17px;
    border: 2px solid #e5e7eb;
    border-radius: 12px;
    color: #6b7280;
}

.search .icon {
    width: 34px;
    height: 34px;
}

.search-input {
    flex: 1;
    border: 0;
    outline: 0;
    padding: 0;
    background-color: transparent;
    font-size: 28px;
    color: #111827;
}

.search-input::placeholder {
    color: #6b7280;
}

.table {
    margin-top: 32px;
    width: 2286px;
}

.t-head {
    position: relative;
    display: flex;
    align-items: center;
    height: 96px;
    border-bottom: 2px solid #e5e7eb;
    font-size: 28px;
    font-weight: 500;
    letter-spacing: -.3px;
    color: #6b7280;
}

.t-row {
    position: relative;
    display: flex;
    align-items: center;
    height: 187px;
    border-bottom: 2px solid #e5e7eb;
}

.c-name {
    width: 313px;
    padding-left: 32px;
    flex-shrink: 0;
}

.c-leave {
    display: flex;
    flex-direction: column;
    align-items: flex-start;
    width: 231px;
    flex-shrink: 0;
    white-space: nowrap;
}

.c-leave-top {
    align-self: flex-start;
    padding-top: 33px;
}

.t-head .c-leave {
    display: block;
}

.t-head .c-actions {
    position: absolute;
    right: 746px;
    white-space: nowrap;
}

.c-dates {
    width: 666px;
    flex-shrink: 0;
    align-self: flex-start;
    padding-top: 44px;
    font-size: 28px;
    letter-spacing: 0;
    white-space: nowrap;
}

.c-loc {
    align-self: flex-start;
    padding-top: 54px;
}

.person {
    font-size: 28px;
    line-height: 40px;
    font-weight: 500;
    letter-spacing: -.3px;
}

.person-id {
    font-size: 24px;
    line-height: 32px;
    letter-spacing: 0;
    color: #6b7280;
}

.pill {
    display: inline-flex;
    align-items: center;
    height: 40px;
    padding: 0 22px;
    background-color: #e7ecf7;
    border-radius: 20px;
    font-size: 24px;
    font-weight: 500;
    color: #12235f;
}

.pill-text {
    color: #2f4aa0;
}

.leave-line {
    margin-top: 8px;
    font-size: 24px;
    line-height: 32px;
    color: #6b7280;
}

.c-actions {
    position: absolute;
    right: 44px;
    top: 0;
    bottom: 0;
    display: flex;
    align-items: center;
    gap: 20px;
}

.act {
    display: flex;
    align-items: center;
    gap: 22px;
    padding: 0 24px 0 20px;
    font-size: 28px;
    font-weight: 500;
    letter-spacing: -.1px;
    color: #111827;
    white-space: nowrap;
}

.act .icon {
    width: 36px;
    height: 36px;
}

.act-view {
    padding-right: 18px;
}

.act-attach {
    height: 72px;
    border: 2px solid #e5e7eb;
    border-radius: 12px;
    color: #b5b5b5;
}

.act-attach .icon {
    color: #a0a0a0;
}

.act-del {
    color: #ef4444;
}

.scroll-thumb {
    position: absolute;
    right: 8px;
    top: 0;
    width: 14px;
    height: 1074px;
    background-color: #808080;
    border-radius: 0 0 7px 7px;
}

.assistant {
    position: absolute;
    right: 48px;
    bottom: 160px;
    display: flex;
    align-items: center;
    justify-content: center;
    gap: 15px;
    width: 394px;
    height: 111px;
    padding: 0;
    border: 0;
    border-radius: 56px;
    background-color: #554bff;
    box-shadow: 0 10px 30px rgba(0, 0, 0, .25);
    font-size: 28px;
    font-weight: 500;
    letter-spacing: -.3px;
    color: #fff;
}

.assistant .icon {
    width: 36px;
    height: 36px;
}

.assistant-star {
    margin-left: 8px;
    color: #fde047;
}

/* dialog */
.overlay {
    position: absolute;
    inset: 0;
    z-index: 2;
    display: flex;
    justify-content: center;
    align-items: center;
    background-color: rgba(0, 0, 0, .8);
}

.modal {
    position: relative;
    width: 1200px;
    padding: 58px 49px 47px 48px;
    background-color: #fff;
    border: 2px solid #e5e7eb;
    border-radius: 16px;
}

.modal-head {
    display: flex;
    justify-content: space-between;
    height: 76px;
}

.modal-title {
    font-size: 36px;
    line-height: 36px;
    font-weight: 600;
    letter-spacing: -.045em;
    color: #0b0b0f;
}

.modal-desc {
    font-size: 28px;
    line-height: 40px;
    letter-spacing: -.45px;
    color: #78716c;
}

.broken-img {
    display: flex;
    align-items: flex-start;
    width: 223px;
    height: 60px;
    margin-top: -10px;
    overflow: hidden;
    font-size: 32px;
    line-height: 44px;
    color: #111;
    white-space: nowrap;
}

.broken-img span {
    margin-top: 4px;
}

.broken-icon {
    width: 31px;
    height: 32px;
    flex-shrink: 0;
}

.person-box {
    height: 339px;
    margin-top: 74px;
    padding: 49px 48px;
    background-color: #f9fafb;
    border: 2px solid #e5e7eb;
    border-radius: 12px;
}

.field-label {
    font-size: 32px;
    line-height: 48px;
    font-weight: 500;
    color: #0b0b0f;
}

.field-value {
    margin-top: 8px;
    font-size: 32px;
    line-height: 48px;
    color: #0b0b0f;
}

.field-muted {
    color: #6b7280;
}

.person-name {
    margin-top: 7px;
    font-size: 36px;
    line-height: 56px;
    font-weight: 700;
    letter-spacing: -.01em;
    color: #0b0b0f;
}

.person-gap {
    margin-top: 25px;
}

.fields {
    display: grid;
    grid-template-columns: repeat(3, 1fr);
    gap: 49px 48px;
    margin-top: 50px;
}

.field {
    height: 103px;
}

.field-wide {
    grid-column: 1 / -1;
}

.modal-foot {
    display: flex;
    justify-content: flex-end;
    gap: 16px;
    margin-top: 64px;
}

.mbtn {
    display: flex;
    align-items: center;
    height: 80px;
    border: 2px solid transparent;
    border-radius: 12px;
    font-size: 28px;
    font-weight: 500;
    color: #0b0b0f;
}

.mbtn .icon {
    width: 36px;
    height: 36px;
}

.mbtn-close {
    width: 142px;
    justify-content: center;
    background-color: #fff;
    border-color: #e5e7eb;
    box-shadow: 0 0 0 3px #fff, 0 0 0 7px #000;
}

.mbtn-print {
    gap: 32px;
    width: 191px;
    padding: 0 0 0 28px;
    background-color: #f4f4f3;
}

.mbtn-edit {
    gap: 31px;
    width: 178px;
    padding: 0 0 0 28px;
    background-color: #12235f;
    color: #fff;
}

.modal-x {
    position: absolute;
    right: 32px;
    top: 32px;
    display: flex;
    justify-content: center;
    align-items: center;
    width: 64px;
    height: 64px;
    padding: 0;
    border: 0;
    border-radius: 8px;
    background-color: #e5e7eb;
    color: #111827;
}

.modal-x .icon {
    width: 40px;
    height: 40px;
}

.scribble {
    position: absolute;
    left: 0;
    top: 0;
    width: 2880px;
    height: 1800px;
    fill: none;
    stroke: #e8604c;
    stroke-width: 1.6;
    pointer-events: none;
    z-index: 5;
}
```
